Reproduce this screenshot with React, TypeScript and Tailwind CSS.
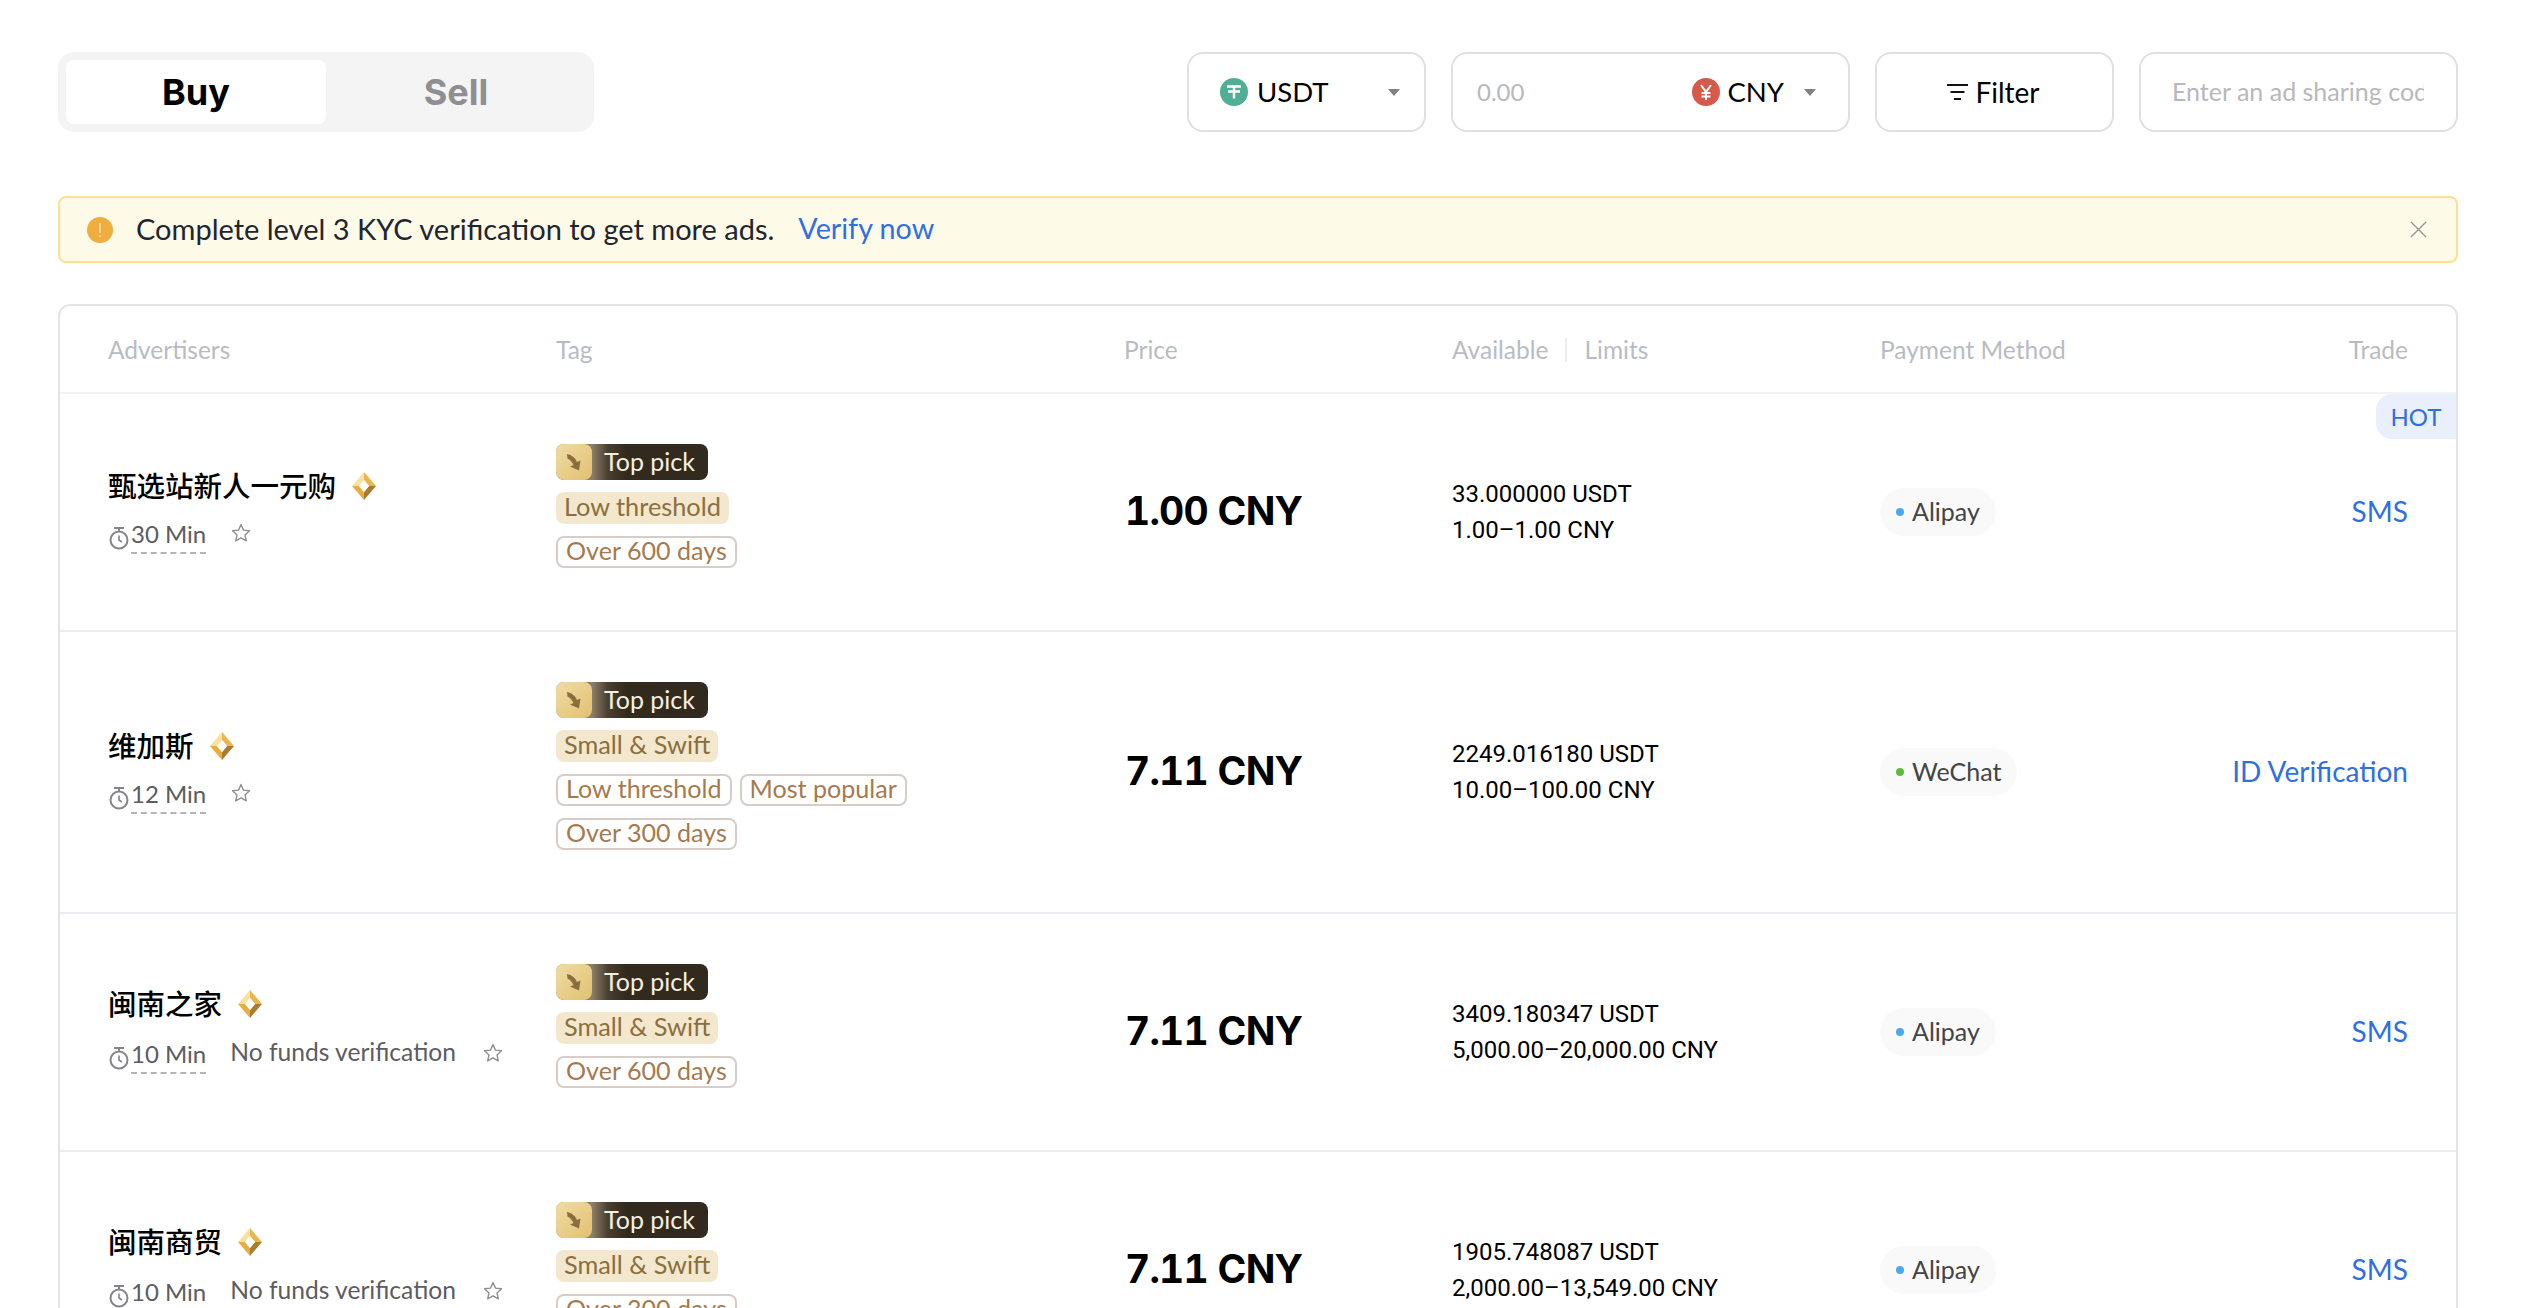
import React from "react";

const BASE = "font-['Lato','Noto_Sans_CJK_SC',sans-serif]";
const NUM = "font-['Roboto','Noto_Sans_CJK_SC',sans-serif]";

function Diamond() {
  return (
    <svg width="24" height="28" viewBox="0 0 24 28" className="shrink-0">
      <polygon points="12,0 12,8 7,14 0,14" fill="#fbe19c" />
      <polygon points="12,0 24,14 17,14 12,8" fill="#eab650" />
      <polygon points="0,14 7,14 12,20 12,28" fill="#e9ac3e" />
      <polygon points="24,14 17,14 12,20 12,28" fill="#a97c32" />
      <polygon points="12,8 17,14 12,20 7,14" fill="#ffffff" />
    </svg>
  );
}

function Stopwatch() {
  return (
    <svg width="20" height="24" viewBox="0 0 20 24" fill="none" stroke="#85858a" strokeWidth="2" className="shrink-0">
      <circle cx="10" cy="14" r="8.5" />
      <path d="M5 2h10M10 2v3" />
      <path d="M10 9.5V14l3 2" strokeWidth="1.6" />
    </svg>
  );
}

function StarIcon() {
  return (
    <svg width="20" height="20" viewBox="0 0 20 20" fill="none" stroke="#8f8f94" strokeWidth="1.4" strokeLinejoin="round" className="shrink-0">
      <path d="M10 1.5l2.5 5.6 6 .7-4.5 4.1 1.3 6-5.3-3.1-5.3 3.1 1.3-6L1.500 7.800l6-.7z" />
    </svg>
  );
}

function TopPick() {
  return (
    <div className="flex h-[36px] w-[152px] items-center rounded-[8px] bg-[linear-gradient(90deg,#8c7d66_24%,#4a3f30_34%,#332a1e_46%,#322a1f_100%)]">
      <div className="flex h-[36px] w-[36px] items-center justify-center rounded-[8px] bg-[linear-gradient(135deg,#f0dca6,#e2c070)]">
        <svg width="18" height="20" viewBox="0 0 18 20">
          <path d="M2 2C7 3 10.500 6 12 10L15.500 8.500 14 18.500 5 14.500l3.500-1.500C7.500 10.500 5.500 8 2.500 6.500z" fill="#8a6f3c" />
        </svg>
      </div>
      <span className="ml-[12px] pb-[2px] text-[25px] leading-none text-[#f5efe2]">Top pick</span>
    </div>
  );
}

function Solid({ t }: { t: string }) {
  return (
    <span className="inline-flex h-[32px] items-center rounded-[8px] bg-[#f3e8cd] px-[8px] pb-[2px] text-[25.3px] leading-none text-[#8a6f3f]">
      {t}
    </span>
  );
}

function Outline({ t }: { t: string }) {
  return (
    <span className="inline-flex h-[32px] items-center rounded-[8px] border-2 border-[#d4cdc8] px-[8px] pb-[2px] text-[25.1px] leading-none text-[#a67a4d]">
      {t}
    </span>
  );
}

type Row = {
  name: string;
  mins: string;
  noFunds?: boolean;
  solid: string;
  outlines: string[][];
  price: string;
  avail: string;
  limit: string;
  pay: string;
  dot: string;
  trade: string;
  hot?: boolean;
};

const rows: Row[] = [
  {
    name: "甄选站新人一元购",
    mins: "30 Min",
    solid: "Low threshold",
    outlines: [["Over 600 days"]],
    price: "1.00 CNY",
    avail: "33.000000 USDT",
    limit: "1.00–1.00 CNY",
    pay: "Alipay",
    dot: "bg-[#4aa8ee]",
    trade: "SMS",
    hot: true,
  },
  {
    name: "维加斯",
    mins: "12 Min",
    solid: "Small & Swift",
    outlines: [["Low threshold", "Most popular"], ["Over 300 days"]],
    price: "7.11 CNY",
    avail: "2249.016180 USDT",
    limit: "10.00–100.00 CNY",
    pay: "WeChat",
    dot: "bg-[#5dbb3a]",
    trade: "ID Verification",
  },
  {
    name: "闽南之家",
    mins: "10 Min",
    noFunds: true,
    solid: "Small & Swift",
    outlines: [["Over 600 days"]],
    price: "7.11 CNY",
    avail: "3409.180347 USDT",
    limit: "5,000.00–20,000.00 CNY",
    pay: "Alipay",
    dot: "bg-[#4aa8ee]",
    trade: "SMS",
  },
  {
    name: "闽南商贸",
    mins: "10 Min",
    noFunds: true,
    solid: "Small & Swift",
    outlines: [["Over 300 days"]],
    price: "7.11 CNY",
    avail: "1905.748087 USDT",
    limit: "2,000.00–13,549.00 CNY",
    pay: "Alipay",
    dot: "bg-[#4aa8ee]",
    trade: "SMS",
  },
];

const GRID = "grid grid-cols-[448px_568px_328px_428px_1fr] pl-[48px] pr-[48px]";

export default function App() {
  return (
    <div className={`h-[1308px] overflow-hidden bg-white pl-[58px] pr-[70px] pt-[52px] ${BASE}`}>
      {/* top bar */}
      <div className="flex items-center justify-between">
        <div className="flex h-[80px] w-[536px] items-center rounded-[16px] bg-[#f4f4f4] p-[8px]">
          <div className="flex h-[64px] w-[260px] items-center justify-center rounded-[8px] bg-white text-[36px] font-bold text-black font-['Inter',sans-serif]">
            Buy
          </div>
          <div className="flex h-[64px] flex-1 items-center justify-center text-[36px] font-bold text-[#8e8e93] font-['Inter',sans-serif]">
            Sell
          </div>
        </div>
        <div className="flex items-center gap-[25px]">
          <div className="flex h-[80px] w-[239px] items-center rounded-[16px] border-2 border-[#e0e0e0] pl-[31px] pr-[24px]">
            <svg width="28" height="28" viewBox="0 0 28 28" className="shrink-0">
              <circle cx="14" cy="14" r="14" fill="#50ae95" />
              <path d="M7 8.500h14M14 8.500v12M8 13.500h12" stroke="#fff" strokeWidth="2.400" fill="none" />
            </svg>
            <span className="ml-[9px] text-[27.5px] leading-none text-black">USDT</span>
            <svg width="12" height="7" viewBox="0 0 12 7" className="ml-auto">
              <path d="M0 0h12L6 7z" fill="#808085" />
            </svg>
          </div>
          <div className="flex h-[80px] w-[399px] items-center rounded-[16px] border-2 border-[#e0e0e0] pl-[24px] pr-[32px]">
            <input
              readOnly
              placeholder="0.00"
              className="w-[100px] bg-transparent text-[24px] outline-none placeholder:text-[#b8b8bc]"
            />
            <svg width="28" height="28" viewBox="0 0 28 28" className="ml-auto shrink-0">
              <circle cx="14" cy="14" r="14" fill="#d55a4a" />
              <path d="M9 7l5 7 5-7M14 14v8M9.500 15h9M9.500 18.500h9" stroke="#fff" strokeWidth="2" fill="none" />
            </svg>
            <span className="ml-[7px] text-[27.5px] leading-none text-black">CNY</span>
            <svg width="12" height="7" viewBox="0 0 12 7" className="ml-[20px]">
              <path d="M0 0h12L6 7z" fill="#808085" />
            </svg>
          </div>
          <div className="flex h-[80px] w-[239px] items-center justify-center rounded-[16px] border-2 border-[#e0e0e0] pr-[2px]">
            <svg width="21" height="18" viewBox="0 0 21 18" fill="none" stroke="#111" strokeWidth="2" className="mr-[7px]">
              <path d="M0 2h21M3.500 9h14M7 16h7" />
            </svg>
            <span className="text-[28px] leading-none text-black">Filter</span>
          </div>
          <div className="flex h-[80px] w-[319px] items-center rounded-[16px] border-2 border-[#e0e0e0] pl-[31px] pr-[32px]">
            <input
              readOnly
              placeholder="Enter an ad sharing code"
              className="w-full bg-transparent text-[25px] outline-none placeholder:text-[#b8b8bc]"
            />
          </div>
        </div>
      </div>

      {/* alert */}
      <div className="mt-[64px] flex h-[67px] items-center rounded-[8px] border-2 border-[#fbe28f] bg-[#fefae8] pl-[27px] pr-[29px]">
        <svg width="26" height="26" viewBox="0 0 26 26" className="shrink-0">
          <circle cx="13" cy="13" r="13" fill="#f0ad3f" />
          <path d="M13 6v10M13 18.500v1.500" stroke="#fbe9c4" strokeWidth="1.400" />
        </svg>
        <span className="ml-[23px] pb-[2px] text-[29px] leading-none text-[#1f2630]">
          Complete level 3 KYC verification to get more ads.
        </span>
        <span className="ml-[24px] pb-[2px] text-[28.7px] leading-none text-[#2f6fe0]">Verify now</span>
        <svg width="17" height="17" viewBox="0 0 17 17" fill="none" stroke="#969696" strokeWidth="1.400" className="ml-auto">
          <path d="M1 1l15 15M16 1L1 16" />
        </svg>
      </div>

      {/* table */}
      <div className="mt-[41px] rounded-t-[12px] border-2 border-[#e2e4e7]">
        <div className={`${GRID} h-[88px] items-center border-b-2 border-[#f2f3f4] pt-[2px] text-[24.5px] text-[#b8bcc2]`}>
          <div>Advertisers</div>
          <div>Tag</div>
          <div>Price</div>
          <div className="flex items-center">
            <span>Available</span>
            <span className="mx-[17px] h-[24px] w-[2px] bg-[#ececee]" />
            <span>Limits</span>
          </div>
          <div className="flex items-center justify-between">
            <span>Payment Method</span>
            <span>Trade</span>
          </div>
        </div>

        {rows.map((r) => (
          <div key={r.name} className={`${GRID} relative items-center border-b-2 border-[#e9edf1] py-[50px]`}>
            {r.hot && (
              <div className="absolute right-0 top-0 flex h-[45px] w-[80px] items-center justify-center rounded-l-[16px] bg-[#e9effb] text-[24px] leading-none text-[#2f6fe0]">
                HOT
              </div>
            )}
            <div className="mb-[3px]">
              <div className="flex items-center gap-[16px]">
                <span className="text-[28.5px] font-medium leading-[36px] text-black">{r.name}</span>
                <Diamond />
              </div>
              <div className="mt-[18px] flex items-center text-[24px] leading-none text-[#5c5c61]">
                <span className="ml-[1px]">
                  <Stopwatch />
                </span>
                <span className="ml-[2px] border-b-2 border-dashed border-[#b4b4b8] pb-[6px]">{r.mins}</span>
                {r.noFunds && <span className="ml-[24px] pb-[10px] text-[24.6px]">No funds verification</span>}
                <span className={r.noFunds ? "ml-[27px] pb-[10px]" : "ml-[25px] pb-[10px]"}>
                  <StarIcon />
                </span>
              </div>
            </div>
            <div className="flex flex-col items-start">
              <div className="mb-[12px]">
                <TopPick />
              </div>
              <div className="mb-[12px]">
                <Solid t={r.solid} />
              </div>
              {r.outlines.map((line) => (
                <div key={line.join()} className="mb-[12px] flex gap-[8px]">
                  {line.map((t) => (
                    <Outline key={t} t={t} />
                  ))}
                </div>
              ))}
            </div>
            <div className="pb-[3px] pl-[1px] text-[39px] font-bold leading-none tracking-[-0.8px] tabular-nums text-black font-['Inter',sans-serif]">{r.price}</div>
            <div className={`text-[24px] leading-[36px] text-black ${NUM}`}>
              <div>{r.avail}</div>
              <div>{r.limit}</div>
            </div>
            <div className="flex items-center justify-between">
              <span className="flex h-[48px] items-center rounded-full bg-[#f9f9f9] pb-[2px] pl-[16px] pr-[16px] text-[25px] leading-none text-[#444]">
                <span className={`mr-[8px] mt-[2px] h-[8px] w-[8px] rounded-full ${r.dot}`} />
                {r.pay}
              </span>
              <span className="pb-[2px] text-[28px] leading-none text-[#2f6fe0]">{r.trade}</span>
            </div>
          </div>
        ))}
      </div>
    </div>
  );
}
